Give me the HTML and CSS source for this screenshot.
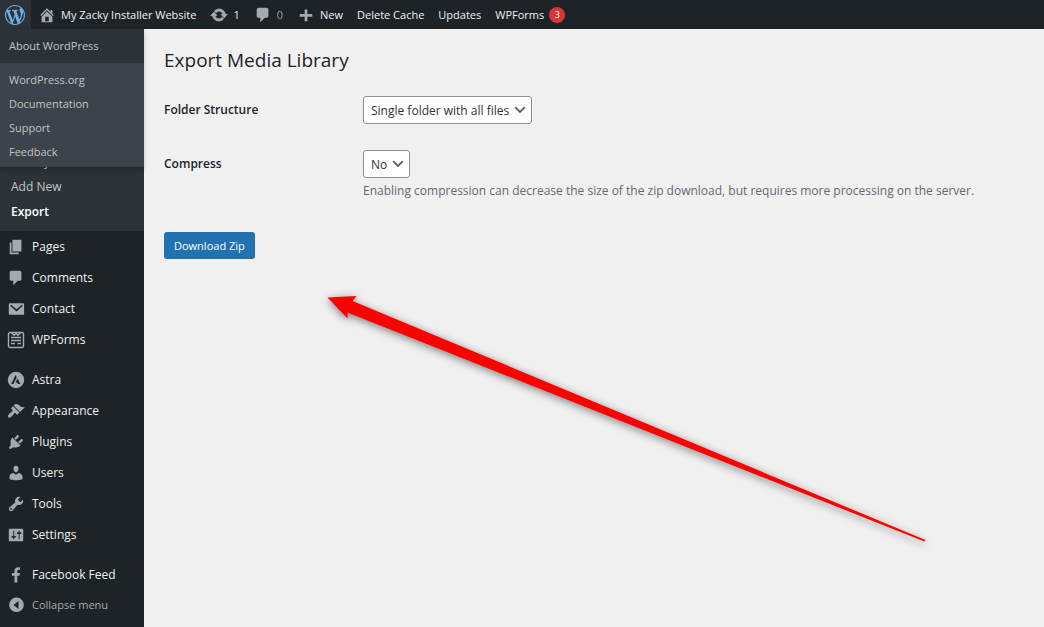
FILE: index.html
```
<!DOCTYPE html>
<html lang="en">
<head>
<meta charset="utf-8">
<title>Export Media Library</title>
<link rel="stylesheet" href="styles.css">
</head>
<body>
<header class="adminbar">
  <div class="bar-menu">
    <button class="logo" aria-label="WordPress menu">
      <svg width="20" height="20" viewBox="0 0 20 20"><path fill="#72aee6" d="M20 10c0-5.51-4.49-10-10-10C4.480 0 0 4.490 0 10c0 5.520 4.480 10 10 10 5.510 0 10-4.480 10-10zM7.780 15.370L4.370 6.220c.550-.020 1.170-.080 1.170-.080.500-.060.440-1.130-.060-1.110 0 0-1.450.110-2.370.110-.180 0-.370 0-.580-.010C4.120 2.690 6.870 1.110 10 1.110c2.330 0 4.450.870 6.050 2.340-.680-.110-1.650.390-1.650 1.580 0 .740.450 1.360.900 2.100.350.610.550 1.360.550 2.460 0 1.490-1.400 5-1.400 5l-3.030-8.370c.540-.020.820-.170.820-.170.500-.050.440-1.250-.060-1.220 0 0-1.440.120-2.380.120-.870 0-2.330-.120-2.330-.120-.500-.030-.560 1.200-.060 1.220l.920.080 1.260 3.410zM17.410 10c.240-.640.740-1.870.430-4.250.700 1.290 1.050 2.710 1.050 4.250 0 3.290-1.730 6.240-4.400 7.780.970-2.590 1.940-5.200 2.920-7.780zM6.100 18.090C3.120 16.650 1.110 13.530 1.110 10c0-1.300.230-2.480.720-3.590C3.250 10.300 4.670 14.200 6.100 18.090zm4.030-6.630l2.580 6.980c-.860.290-1.760.450-2.710.450-.790 0-1.570-.110-2.290-.330.810-2.380 1.620-4.740 2.420-7.100z"/></svg>
    </button>
    <nav class="popup" aria-label="WordPress">
      <div class="popup-top"><a href="#">About WordPress</a></div>
      <div class="popup-rest">
        <a href="#">WordPress.org</a>
        <a href="#">Documentation</a>
        <a href="#">Support</a>
        <a href="#">Feedback</a>
      </div>
    </nav>
  </div>
  <nav class="bar-links" aria-label="Toolbar">
    <a href="#" class="bar-link"><svg width="18" height="18" viewBox="0 0 20 20"><path d="M16 8.500l1.530 1.530-1.060 1.060L10 4.600l-6.470 6.500-1.060-1.070L10 2.500l4 4v-2h2v4zm-6-2.460l6 5.990V18H4v-5.970zM12 17v-5H8v5h4z"/></svg><span>My Zacky Installer Website</span></a>
    <a href="#" class="bar-link"><svg width="18" height="18" viewBox="0 0 20 20"><path stroke="#a7aaad" stroke-width=".8" d="M10.200 3.280c3.530 0 6.430 2.610 6.920 6h2.080l-3.500 4-3.500-4h2.320c-.450-1.970-2.210-3.450-4.320-3.450-1.450 0-2.730.710-3.540 1.780L4.950 5.660C6.230 4.200 8.110 3.280 10.200 3.280zm-.400 13.440c-3.520 0-6.430-2.610-6.920-6H.800l3.500-4c1.170 1.330 2.330 2.670 3.500 4H5.480c.450 1.970 2.210 3.450 4.320 3.450 1.450 0 2.730-.710 3.540-1.780l1.710 1.950c-1.280 1.460-3.150 2.380-5.250 2.380z"/></svg><span>1</span></a>
    <a href="#" class="bar-link"><svg width="18" height="18" viewBox="0 0 20 20"><path d="M5 2h9c1.100 0 2 .900 2 2v7c0 1.100-.900 2-2 2h-2l-5 5v-5H5c-1.100 0-2-.900-2-2V4c0-1.100.900-2 2-2z"/></svg><span class="dim">0</span></a>
    <a href="#" class="bar-link"><svg width="18" height="18" viewBox="0 0 20 20"><path d="M17 9v3h-5.500v5h-3v-5H3V9h5.500V4h3v5z"/></svg><span>New</span></a>
    <a href="#" class="bar-link">Delete Cache</a>
    <a href="#" class="bar-link">Updates</a>
    <a href="#" class="bar-link">WPForms <span class="badge">3</span></a>
  </nav>
</header>
<div class="layout">
  <nav class="sidebar" aria-label="Main menu">
    <div class="submenu">
      <a href="#">Library</a>
      <a href="#">Add New</a>
      <a href="#" class="current">Export</a>
    </div>
    <div class="group">
      <a href="#" class="item"><svg width="18" height="18" viewBox="0 0 20 20"><path d="M6 15V2h10v13H6zm-1 1h8v2H3V5h2v11z"/></svg>Pages</a>
      <a href="#" class="item"><svg width="18" height="18" viewBox="0 0 20 20"><path d="M5 2h9c1.100 0 2 .900 2 2v7c0 1.100-.900 2-2 2h-2l-5 5v-5H5c-1.100 0-2-.900-2-2V4c0-1.100.900-2 2-2z"/></svg>Comments</a>
      <a href="#" class="item"><svg width="18" height="18" viewBox="0 0 20 20"><path fill-rule="evenodd" d="M3 3.500h15c.600 0 1 .400 1 1v11c0 .600-.400 1-1 1H3c-.600 0-1-.400-1-1v-11c0-.600.400-1 1-1zM4.500 5.300l-1 1 7.100 6.400 6.900-6.400-1-1-5.900 5z"/></svg>Contact</a>
      <a href="#" class="item"><svg width="18" height="18" viewBox="0 0 18 18"><g fill="none" stroke="#a7aaad" stroke-width="1.400"><rect x="1.500" y="1.500" width="15" height="15" rx="1.500"/><path d="M4.500 2l2.500 2.200L9 2.500l2 1.700L13.500 2M4 6.500h10M4 9.500h10M4 12.500h4M10.500 12.500H14"/></g></svg>WPForms</a>
    </div>
    <div class="group">
      <a href="#" class="item"><svg width="18" height="18" viewBox="0 0 18 18"><circle cx="9" cy="9" r="8.200"/><path fill="#1d2327" d="M8.600 4L4.200 13h2.200L9.700 6.200zM10.500 7.600L8.500 11.400h1.700l.700 1.600h2.500z"/></svg>Astra</a>
      <a href="#" class="item"><svg width="18" height="18" viewBox="0 0 20 20"><path d="M14.480 11.060L7.410 3.990l1.500-1.500c.500-.560 2.300-.470 3.510.320 1.210.800 1.430 1.280 2.910 2.100 1.180.640 2.450 1.260 4.450.850zm-.710.710L6.700 4.700 4.930 6.470c-.390.390-.390 1.020 0 1.410l1.060 1.060c.390.390.390 1.030 0 1.420-.600.600-1.430 1.110-2.210 1.690-.350.260-.700.530-1.010.840C1.430 14.230.400 16.080 1.400 17.070c.990 1 2.840-.030 4.180-1.360.310-.310.580-.660.850-1.020.570-.780 1.080-1.610 1.690-2.210.390-.390 1.020-.390 1.410 0l1.060 1.060c.390.390 1.020.390 1.410 0z"/></svg>Appearance</a>
      <a href="#" class="item"><svg width="18" height="18" viewBox="0 0 20 20"><path d="M13.110 4.360L9.870 7.600 8 5.730l3.240-3.240c.350-.340 1.050-.200 1.560.320.520.510.660 1.210.310 1.550zm-8 1.770l.910-1.120 9.010 9.010-1.190.840c-.710.710-2.630 1.160-3.820 1.160H6.140L4.900 17.260c-.590.590-1.540.590-2.120 0-.590-.580-.590-1.530 0-2.120l1.240-1.240v-3.880c0-1.130.400-3.190 1.090-3.890zm7.260 3.970l3.240-3.240c.340-.350 1.040-.210 1.550.310.520.510.660 1.210.310 1.550l-3.240 3.250z"/></svg>Plugins</a>
      <a href="#" class="item"><svg width="18" height="18" viewBox="0 0 20 20"><path d="M10 9.250c-2.270 0-2.730-3.440-2.730-3.440C7 4.020 7.820 2 9.970 2c2.160 0 2.980 2.020 2.710 3.810 0 0-.410 3.440-2.680 3.440zm0 2.570L12.720 10c2.390 0 4.520 2.330 4.520 4.530v2.490s-3.650 1.130-7.240 1.130c-3.650 0-7.240-1.130-7.240-1.130v-2.490c0-2.250 1.940-4.480 4.470-4.480z"/></svg>Users</a>
      <a href="#" class="item"><svg width="18" height="18" viewBox="0 0 20 20"><path d="M16.680 9.770c-1.340 1.340-3.300 1.670-4.950.990l-5.410 6.520c-.990.990-2.590.990-3.580 0s-.990-2.590 0-3.570l6.520-5.420c-.680-1.650-.350-3.610.990-4.950 1.280-1.280 3.120-1.620 4.720-1.060l-2.890 2.890 2.820 2.820 2.860-2.870c.530 1.580.180 3.390-1.080 4.650zM3.810 16.210c.400.390 1.040.390 1.430 0 .400-.400.400-1.040 0-1.430-.390-.400-1.030-.400-1.430 0-.390.390-.390 1.030 0 1.430z"/></svg>Tools</a>
      <a href="#" class="item"><svg width="18" height="18" viewBox="0 0 20 20"><path fill-rule="evenodd" d="M18 16V4c0-.550-.450-1-1-1H3c-.550 0-1 .450-1 1v12c0 .550.450 1 1 1h14c.550 0 1-.450 1-1zM8 11h1c.550 0 1 .450 1 1s-.450 1-1 1H8v1.500c0 .280-.220.500-.500.500s-.500-.220-.500-.500V13H6c-.550 0-1-.450-1-1s.450-1 1-1h1V5.500c0-.280.220-.500.500-.500s.500.220.500.500V11zm5-2h-1c-.550 0-1-.450-1-1s.450-1 1-1h1V5.500c0-.280.220-.500.500-.500s.500.220.500.500V7h1c.550 0 1 .450 1 1s-.450 1-1 1h-1v5.500c0 .280-.220.500-.500.500s-.500-.220-.500-.500V9z"/></svg>Settings</a>
    </div>
    <div class="group">
      <a href="#" class="item"><svg width="18" height="18" viewBox="0 0 18 18"><path d="M7.500 16.500V9.800H5V7h2.500V5c0-2.500 1.400-3.800 3.700-3.800.900 0 1.800.200 1.800.200v2.300h-1.200c-1.100 0-1.500.600-1.500 1.400V7h2.600l-.400 2.800h-2.200v6.700z"/></svg>Facebook Feed</a>
      <button class="item collapse"><svg width="18" height="18" viewBox="0 0 18 18"><path fill-rule="evenodd" d="M9.500 1.500a7.300 7.300 0 1 0 .01 0zM11.500 5v8L6.500 9z"/></svg>Collapse menu</button>
    </div>
  </nav>
  <main class="content">
    <h1>Export Media Library</h1>
    <form class="form">
      <div class="row">
        <label for="folder">Folder Structure</label>
        <div>
          <div class="select">
            <select id="folder"><option>Single folder with all files</option></select>
            <svg width="16" height="16" viewBox="0 0 20 20"><path d="M5 6l5 5 5-5 2 1-7 7-7-7z"/></svg>
          </div>
        </div>
      </div>
      <div class="row">
        <label for="compress">Compress</label>
        <div>
          <div class="select">
            <select id="compress"><option>No</option></select>
            <svg width="16" height="16" viewBox="0 0 20 20"><path d="M5 6l5 5 5-5 2 1-7 7-7-7z"/></svg>
          </div>
          <p class="hint">Enabling compression can decrease the size of the zip download, but requires more processing on the server.</p>
        </div>
      </div>
      <button type="button" class="primary">Download Zip</button>
    </form>
    <svg class="arrow" width="640" height="270" viewBox="310 285 640 270" aria-hidden="true"><path d="M327.500 297.500L356.500 296 352.500 301 925.500 540 924.500 541.500 347.500 312.500V318.500z"/></svg>
  </main>
</div>
</body>
</html>
```

FILE: styles.css
```
* { box-sizing: border-box; }
body {
  margin: 0;
  min-height: 100vh;
  display: flex;
  flex-direction: column;
  background: #f0f0f1;
  color: #1d2327;
  font: 12px/20px "Open Sans", "Noto Sans", sans-serif;
}
a { color: inherit; text-decoration: none; }
button, select { font: inherit; color: inherit; }
svg { display: block; flex: none; fill: #a7aaad; }

.adminbar {
  display: flex;
  height: 29px;
  background: #1d2327;
  color: #f0f0f1;
  font-size: 11px;
}
.bar-menu { position: relative; z-index: 2; }
.logo {
  display: flex;
  align-items: center;
  width: 31px;
  height: 29px;
  padding: 0 0 0 5px;
  border: 0;
  background: #2c3338;
}
.popup {
  position: absolute;
  top: 100%;
  left: 0;
  width: 144px;
  background: #2c3338;
  color: #c3c4c7;
  box-shadow: 0 3px 5px rgba(0, 0, 0, .2);
}
.popup a { display: block; padding: 0 9px; line-height: 24px; }
.popup-top { padding: 5px 0; }
.popup-rest { padding: 5px 0 3px; background: #3c434a; }
.bar-links { display: flex; padding-left: 7px; gap: 14px; }
.bar-link { display: flex; align-items: center; gap: 5px; white-space: nowrap; }
.dim { opacity: .6; }
.badge {
  width: 16px;
  height: 16px;
  border-radius: 50%;
  background: #d63638;
  color: #fff;
  font-size: 9px;
  line-height: 16px;
  text-align: center;
}

.layout { flex: 1; display: flex; }
.sidebar { width: 144px; flex: none; background: #1d2327; color: #f0f0f1; }
.submenu { padding: 120px 0 7px; background: #2c3338; color: #c3c4c7; }
.submenu a { display: block; padding: 0 11px; line-height: 25px; }
.submenu .current { color: #fff; font-weight: 600; }
.group + .group { margin-top: 9px; }
.item {
  display: flex;
  align-items: center;
  gap: 7px;
  width: 100%;
  height: 31px;
  padding: 0 7px;
}
.collapse { height: 30px; border: 0; background: none; color: #a7aaad; font-size: 11px; }

.content { position: relative; flex: 1; padding: 15px 20px; }
h1 { margin: 0; font-size: 19px; font-weight: 400; line-height: 32px; }
.form { padding-top: 20px; }
.row { display: grid; grid-template-columns: 199px 1fr; }
.row + .row { margin-top: 26px; }
.row label { font-weight: 600; line-height: 28px; }
.select { display: inline-grid; align-items: center; vertical-align: top; }
.select select {
  grid-area: 1 / 1;
  height: 28px;
  padding: 1px 21px 0 7px;
  appearance: none;
  border: 1px solid #8c8f94;
  border-radius: 3px;
  background: #fff;
  color: #2c3338;
}
.select svg {
  grid-area: 1 / 1;
  justify-self: end;
  margin-right: 4px;
  fill: #50575e;
  pointer-events: none;
}
.hint { margin: 3px 0 0; color: #646970; }
.primary {
  height: 27px;
  margin-top: 31px;
  padding: 0 10px;
  border: 0;
  border-radius: 3px;
  background: #2271b1;
  color: #fff;
  font-size: 11px;
}
.arrow {
  position: absolute;
  left: 166px;
  top: 256px;
  fill: #f00;
  filter: drop-shadow(0 2px 4px rgba(0, 0, 0, .5));
  pointer-events: none;
}
```
